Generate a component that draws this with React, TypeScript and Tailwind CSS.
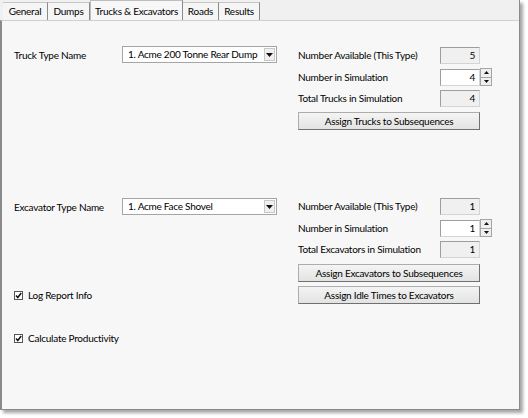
import React from "react";

const tabs = [
  { label: "General", w: "w-[45px]" },
  { label: "Dumps", w: "w-[42px]" },
  { label: "Trucks & Excavators", w: "w-[93px]", active: true },
  { label: "Roads", w: "w-[36px]" },
  { label: "Results", w: "w-[41px]" },
];

function Combo({ value }: { value: string }) {
  return (
    <div className="flex h-[17px] w-[155px] items-center border border-[#a5a5a5] bg-white">
      <span className="flex-1 truncate pl-[5px]">{value}</span>
      <div className="mr-[1px] flex h-[13px] w-[11px] items-center justify-center border border-[#c8c8c8] bg-[#efefef]">
        <svg width="7" height="4" viewBox="0 0 7 4">
          <path d="M0 0h7L3.5 4z" fill="#111" />
        </svg>
      </div>
    </div>
  );
}

function ValueBox({ value, editable }: { value: string; editable?: boolean }) {
  return (
    <div
      className={`flex h-[17px] w-[40px] items-center justify-end border border-[#9d9d9d] border-r-[#d4d4d4] border-b-[#d4d4d4] pr-[4px] ${
        editable ? "bg-white" : "bg-[#f0f0f0]"
      }`}
    >
      {value}
    </div>
  );
}

function Spinner() {
  return (
    <div className="flex h-[18px] w-[12px] flex-col border border-[#a5a5a5] bg-[#efefef]">
      <div className="flex flex-1 items-center justify-center border-b border-[#a5a5a5]">
        <svg width="5" height="3" viewBox="0 0 5 3">
          <path d="M0 3h5L2.5 0z" fill="#111" />
        </svg>
      </div>
      <div className="flex flex-1 items-center justify-center">
        <svg width="5" height="3" viewBox="0 0 5 3">
          <path d="M0 0h5L2.5 3z" fill="#111" />
        </svg>
      </div>
    </div>
  );
}

function Row({
  label,
  value,
  spin,
}: {
  label: string;
  value: string;
  spin?: boolean;
}) {
  return (
    <div className="flex items-center">
      <span className="w-[142px] whitespace-nowrap">{label}</span>
      <ValueBox value={value} editable={spin} />
      {spin && <Spinner />}
    </div>
  );
}

function Button({ label }: { label: string }) {
  return (
    <button className="h-[18px] w-[182px] whitespace-nowrap border border-[#adadad] border-r-[#707070] border-b-[#707070] bg-gradient-to-b from-[#f4f4f4] to-[#e3e3e3] text-center leading-[15px]">
      {label}
    </button>
  );
}

function Check({ label }: { label: string }) {
  return (
    <div className="flex items-center gap-[5px]">
      <div className="flex h-[9px] w-[9px] items-center justify-center border border-[#555] bg-white">
        <svg width="7" height="7" viewBox="0 0 7 7">
          <path d="M1 3.5l1.8 2 3.4-4.5" stroke="#111" strokeWidth="1.5" fill="none" />
        </svg>
      </div>
      <span className="whitespace-nowrap">{label}</span>
    </div>
  );
}

export default function App() {
  return (
    <div
      className="h-[418px] w-[528px] bg-white text-[10px] tracking-[-0.25px] text-black"
      style={{ fontFamily: "Lato, 'Noto Sans', sans-serif" }}
    >
      <div className="flex h-[410px] w-[520px] flex-col border-r border-b border-[#8a8a8a] bg-[#f0f0f0] shadow-[3px_3px_3px_rgba(0,0,0,0.35)]">
        <div className="flex h-[20px] items-end pl-[3px]">
          {tabs.map((t) =>
            t.active ? (
              <div
                key={t.label}
                className={`${t.w} -mb-[1px] flex h-[21px] items-center justify-center whitespace-nowrap border-x border-t border-[#bdbdbd] border-r-[#8a8a8a] bg-[#f7f7f7]`}
              >
                {t.label}
              </div>
            ) : (
              <div
                key={t.label}
                className={`${t.w} flex h-[18px] items-center justify-center whitespace-nowrap border-t border-r border-[#c6c6c6] border-r-[#8a8a8a] bg-[#f5f5f5]`}
              >
                {t.label}
              </div>
            )
          )}
        </div>
        <div className="flex-1 border-l-[2px] border-t border-[#8a8a8a] border-t-[#d0d0d0] bg-[#f7f7f7] pt-[25px] pl-[12px]">
          <div className="flex">
            <div className="flex w-[284px] items-start">
              <span className="mt-[2px] w-[108px] whitespace-nowrap">Truck Type Name</span>
              <Combo value="1. Acme 200 Tonne Rear Dump" />
            </div>
            <div className="mt-[1px] flex flex-col gap-[4px]">
              <Row label="Number Available (This Type)" value="5" />
              <Row label="Number in Simulation" value="4" spin />
              <Row label="Total Trucks in Simulation" value="4" />
              <div className="mt-[1px]">
                <Button label="Assign Trucks to Subsequences" />
              </div>
            </div>
          </div>

          <div className="mt-[68px] flex">
            <div className="flex w-[284px] flex-col">
              <div className="flex items-start">
                <span className="mt-[2px] w-[108px] whitespace-nowrap">Excavator Type Name</span>
                <Combo value="1. Acme Face Shovel" />
              </div>
              <div className="mt-[73px]">
                <Check label="Log Report Info" />
              </div>
            </div>
            <div className="flex flex-col gap-[4px]">
              <Row label="Number Available (This Type)" value="1" />
              <Row label="Number in Simulation" value="1" spin />
              <Row label="Total Excavators in Simulation" value="1" />
              <div className="mt-[2px] flex flex-col gap-[4px]">
                <Button label="Assign Excavators to Subsequences" />
                <Button label="Assign Idle Times to Excavators" />
              </div>
            </div>
          </div>

          <div className="mt-[27px]">
            <Check label="Calculate Productivity" />
          </div>
        </div>
      </div>
    </div>
  );
}
